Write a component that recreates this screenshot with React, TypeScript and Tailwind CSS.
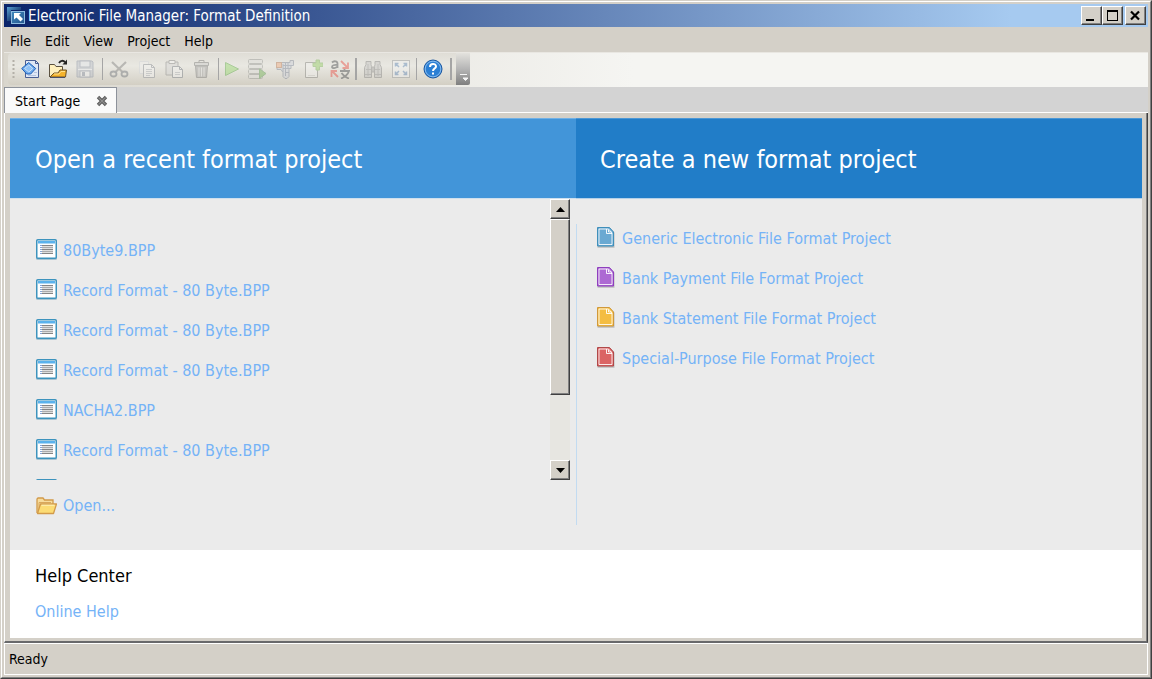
import type { ReactNode } from "react";

const raised =
  "bg-[#d4d0c8] border border-t-white border-l-white border-r-[#404040] border-b-[#404040] shadow-[inset_-1px_-1px_0_#808080]";

const menus = ["File", "Edit", "View", "Project", "Help"];

const recent = [
  "80Byte9.BPP",
  "Record Format - 80 Byte.BPP",
  "Record Format - 80 Byte.BPP",
  "Record Format - 80 Byte.BPP",
  "NACHA2.BPP",
  "Record Format - 80 Byte.BPP",
];

const templates = [
  { label: "Generic Electronic File Format Project", fill: "#6aa9d2", edge: "#3f8fba" },
  { label: "Bank Payment File Format Project", fill: "#ad69d3", edge: "#8e3fbe" },
  { label: "Bank Statement File Format Project", fill: "#f4bd42", edge: "#d0983a" },
  { label: "Special-Purpose File Format Project", fill: "#db6464", edge: "#b04848" },
];

function AppIcon() {
  return (
    <svg width="20" height="20" viewBox="0 0 20 20" aria-hidden="true">
      <defs>
        <linearGradient id="appBack" x1="0" y1="0" x2="1" y2="1">
          <stop offset="0" stopColor="#5aa0d0" />
          <stop offset="0.7" stopColor="#12336b" />
        </linearGradient>
        <linearGradient id="appFront" x1="0" y1="0" x2="1" y2="1">
          <stop offset="0" stopColor="#3f88bd" />
          <stop offset="1" stopColor="#24578f" />
        </linearGradient>
      </defs>
      <path d="M0 15V1h14v3H4v11z" fill="url(#appBack)" />
      <rect x="4.500" y="5.500" width="13" height="12" fill="url(#appFront)" stroke="#8dbbe0" />
      <path d="M7 7h7l-2 2 4 4-2.500 2.500-4-4-2.500 2z" fill="#fff" />
    </svg>
  );
}

function Svg({ children, faded = false }: { children: ReactNode; faded?: boolean }) {
  return (
    <svg width="20" height="20" viewBox="0 0 20 20" fill="none" aria-hidden="true" className={faded ? "opacity-40" : ""}>
      {children}
    </svg>
  );
}

const NewIcon = () => (
  <Svg>
    <path d="M4.500 1.500h10l3 3v14h-13z" fill="#dfe7f5" stroke="#4a5f94" />
    <path d="M14.500 1.500v3h3" stroke="#4a5f94" />
    <path d="M7 16.500h8M13 13.500h3" stroke="#b5c3de" />
    <path d="M0.700 9.500l7-6 7 6-5 5.500h-4z" fill="#6fa9ea" stroke="#1d5fb8" strokeLinejoin="round" />
    <path d="M3.500 9.500l4.300-3.500 4 3.500-4 3.500z" fill="#8fc1f5" stroke="#c9e1fb" />
  </Svg>
);

const OpenIcon = () => (
  <Svg>
    <path d="M1.500 18V5.500h5l1.500 2h6.500V11" fill="#fff0bd" stroke="#5b5140" />
    <path d="M2 18l4-4h4l2-3h6.500l-1 7z" fill="#f5b32c" stroke="#6d5326" />
    <path d="M6 15h5l2-2.500h4" stroke="#ffe08a" />
    <path d="M2 18.500h15" stroke="#4a4f66" />
    <path d="M11 4c1.500-2.500 4-3 6-1" stroke="#222" strokeWidth="1.800" />
    <path d="M14.500 5.500h4.500v-5z" fill="#222" />
  </Svg>
);

const SaveIcon = () => (
  <Svg faded>
    <path d="M2 2h15l1 1v15H2z" fill="#b6bcc8" stroke="#7c869b" />
    <rect x="5" y="2" width="10" height="6" fill="#e4e7ee" stroke="#7c869b" />
    <path d="M3 10.500h14" stroke="#eef0f5" />
    <rect x="5" y="12" width="10" height="6" fill="#f2f3f6" stroke="#7c869b" />
    <rect x="7" y="13" width="3" height="4" fill="#7c869b" />
  </Svg>
);

const CutIcon = () => (
  <Svg faded>
    <path d="M3 3l10.500 10M17 3L6.500 13" stroke="#737373" strokeWidth="2.200" />
    <ellipse cx="4.500" cy="15" rx="3" ry="2.500" stroke="#60666f" strokeWidth="1.800" />
    <ellipse cx="15.500" cy="15" rx="3" ry="2.500" stroke="#60666f" strokeWidth="1.800" />
  </Svg>
);

const CopyIcon = () => (
  <Svg faded>
    <path d="M2.500 2.500h9v12h-9z" fill="#f1f1f1" stroke="#d0d4da" />
    <path d="M6.500 5.500h8l3 3v10h-11z" fill="#f7f7f7" stroke="#7d828b" />
    <path d="M14.500 5.500v3h3" stroke="#7d828b" />
    <path d="M9 10.500h6M9 12.500h6M9 14.500h6M9 16.500h4" stroke="#a9aeb6" />
  </Svg>
);

const PasteIcon = () => (
  <Svg faded>
    <path d="M1 3h12v13H1z" fill="#d3d3d3" stroke="#7b7b7b" />
    <path d="M4 1.500h6v3H4z" fill="#fafafa" stroke="#7b7b7b" />
    <path d="M7.500 7.500h7l3 3v8h-10z" fill="#f5f5f5" stroke="#666d77" />
    <path d="M14.500 7.500v3h3" stroke="#666d77" />
    <path d="M10 13.500h5M10 15.500h5" stroke="#a9aeb6" />
  </Svg>
);

const TrashIcon = () => (
  <Svg faded>
    <path d="M2.500 7h12l-1 11.500h-10z" fill="#9a9a9a" stroke="#6a6a6a" />
    <path d="M6 8.500v9M8.500 8.500v9M11 8.500v9" stroke="#dedede" />
    <path d="M1.500 3.500h14v3h-14z" fill="#c7c7c7" stroke="#6a6a6a" />
    <path d="M6 3.500v-2h5v2" stroke="#6a6a6a" />
  </Svg>
);

const RunIcon = () => (
  <Svg faded>
    <path d="M4.500 3.500l13 6.500-13 6.500z" fill="#8fd862" stroke="#4fa334" strokeLinejoin="round" />
  </Svg>
);

const DataRunIcon = () => (
  <Svg faded>
    {[0.5, 5.5, 10.5, 15.5].map((y) => (
      <rect key={y} x="1.500" y={y} width="14" height="4" rx="1" fill="#dededb" stroke="#8a8c88" />
    ))}
    <path d="M12.500 10l6.500 4.500-6.500 5z" fill="#66ad44" stroke="#4c9140" strokeLinejoin="round" />
  </Svg>
);

const GaugeIcon = () => (
  <Svg faded>
    <path
      d="M2 3.500h13V1.500h3.500v5H16v3h-2v8l-2 2h-2l-2-2v-4l-2-3H2z"
      fill="#c9cdd8"
      stroke="#717a8c"
      strokeLinejoin="round"
    />
    <path d="M8 5v8M10.500 4v13M13 4v5M8 6.500h10M8 9.500h6M10 13.500h4" stroke="#6f7a90" />
    <rect x="1.500" y="3.500" width="5" height="5" fill="#f0a070" stroke="#b06a40" />
  </Svg>
);

const AddPageIcon = () => (
  <Svg faded>
    <path d="M2.500 3.500h12v15h-12z" fill="#f4f4f2" stroke="#73736f" />
    <path d="M5 16.500h7" stroke="#c9c9c5" />
    <path d="M13 1h3.500v3H20v3.500h-3.500V11H13V7.500h-3V4h3z" fill="#8acb52" stroke="#6fae46" />
  </Svg>
);

const ConvertIcon = () => (
  <Svg faded>
    <g stroke="#34383c" strokeWidth="1.800">
      <path d="M2 3.500C4 1.500 7.500 2 7.500 4.500V9M7.500 6C4 5.500 2 6.500 2 8s4 1.500 5.500-.5" />
      <path d="M10 12h9c-1 3-4 6-8 7.500M11.500 14c2 3 4 4.500 7.500 5.500M14.500 9.500V12" />
    </g>
    <g stroke="#e8392e" strokeWidth="1.800">
      <path d="M11 2l6 6M18 3.500V9h-5.500" />
      <path d="M8 18l-6-6M1.500 18v-6H7" />
    </g>
  </Svg>
);

const BinocularsIcon = () => (
  <Svg faded>
    <path d="M3 2.500h5v3l.5 2v11h-7v-10L3 5.500z" fill="#bdbdbd" stroke="#777" />
    <path d="M12 2.500h5v3l1.500 3v10h-7v-11l.5-2z" fill="#bdbdbd" stroke="#777" />
    <path d="M8.500 8h3v5h-3z" fill="#999" stroke="#777" />
    <path d="M3 10.500h5M12 10.500h5M2 15.500h6M12 15.500h6M5 5v12M15 5v12" stroke="#888" />
  </Svg>
);

const FitIcon = () => (
  <Svg faded>
    <rect x="1.500" y="1.500" width="17" height="17" fill="#f4f6f8" stroke="#8b8f94" />
    <g stroke="#517eb5" strokeWidth="1.500">
      <path d="M4.500 7.500v-3h3M4.500 4.500L8 8M12.500 4.500h3v3M15.500 4.500L12 8M4.500 12.500v3h3M4.500 15.500L8 12M12.500 15.500h3v-3M15.500 15.500L12 12" />
    </g>
  </Svg>
);

const HelpIcon = () => (
  <Svg>
    <circle cx="10" cy="10" r="9" fill="#2b7fd4" stroke="#1b57a0" />
    <circle cx="10" cy="10" r="7.800" stroke="#8fc2f2" strokeWidth="0.900" />
    <path d="M7 8c0-4 6-4 6-.5 0 2-3 2.200-3 4.500" stroke="#fff" strokeWidth="2" />
    <rect x="9" y="13.500" width="2" height="2" fill="#fff" />
  </Svg>
);

function Tool({ label, width = "w-7", children }: { label: string; width?: string; children: ReactNode }) {
  return (
    <button type="button" aria-label={label} className={`${width} flex h-7 shrink-0 items-center justify-center`}>
      {children}
    </button>
  );
}

function ListIcon() {
  return (
    <svg width="21" height="21" viewBox="0 0 21 21" className="mb-1 shrink-0" aria-hidden="true">
      <rect x="0" y="1" width="21" height="20" rx="1.500" fill="#a9c3d0" />
      <rect x="0.750" y="0.750" width="19.500" height="18.500" rx="1" fill="#fff" stroke="#3d93bd" strokeWidth="1.500" />
      <rect x="2" y="2" width="17" height="2.500" fill="#5bb2ec" />
      <path d="M4 6.500h2M4 8.500h2M4 10.500h2M4 12.500h2M4 14.500h2" stroke="#86a5d8" />
      <path d="M6 6.500h11M6 10.500h11M6 14.500h11" stroke="#858585" />
      <path d="M6 8.500h11M6 12.500h11" stroke="#ababab" />
      <path d="M6 7.500h11M6 9.500h11M6 11.500h11M6 13.500h11" stroke="#dedede" />
    </svg>
  );
}

function PageIcon({ fill, edge }: { fill: string; edge: string }) {
  return (
    <svg width="18" height="21" viewBox="0 0 18 21" className="mb-1 shrink-0" aria-hidden="true">
      <path d="M0 1h13l4 4v15H0z" transform="translate(0.500 0.700)" fill="#bdbdbd" />
      <path d="M0.500 0.500h12l4 4.500v14h-16z" fill={fill} stroke={edge} />
      <path d="M2 2h9.500l3.500 4v11.500H2z" fill="none" stroke="#fff" strokeOpacity="0.850" />
      <path d="M9.500 2v4.500H15M11.500 2.500v2.500h3" fill="none" stroke="#fff" strokeOpacity="0.900" />
    </svg>
  );
}

function FolderIcon() {
  return (
    <svg width="21" height="18" viewBox="0 0 21 18" className="shrink-0" aria-hidden="true">
      <path d="M1 16V2l1-1h5l1.500 2H17v4" fill="#f7dc9c" stroke="#d29a4a" strokeWidth="1.300" />
      <path d="M3 13V5.500h12" fill="none" stroke="#d9a85c" />
      <path d="M4.500 7h16l-3 9.500H1.500z" fill="#fcdc74" stroke="#d29a4a" strokeWidth="1.300" strokeLinejoin="round" />
      <path d="M5.500 8.200h13" stroke="#fff3bd" />
    </svg>
  );
}

const link = "flex items-center text-[16px] leading-5 text-[#75b3f7]";

export default function App() {
  return (
    <div className="flex min-h-screen flex-col border border-t-[#d4d0c8] border-r-[#404040] border-b-[#404040] border-l-[#d4d0c8] bg-[#d4d0c8] font-['DejaVu_Sans_Condensed','Noto_Sans',sans-serif] text-black">
      <div className="flex grow flex-col border border-t-white border-r-[#808080] border-b-[#808080] border-l-white p-0.5">
        <header>
          <div className="flex h-[23px] items-center bg-[linear-gradient(90deg,#0a246a,#a6caf0_88%)] pr-0.5 pl-[3px]">
            <AppIcon />
            <h1 className="ml-px grow text-[15px] leading-5 text-white">Electronic File Manager: Format Definition</h1>
            <button type="button" aria-label="Minimize" className={`${raised} flex h-[19px] w-[21px] items-center justify-center`}>
              <svg width="13" height="13" aria-hidden="true"><path d="M1 11h8" stroke="#000" strokeWidth="2" /></svg>
            </button>
            <button type="button" aria-label="Maximize" className={`${raised} flex h-[19px] w-[21px] items-center justify-center`}>
              <svg width="13" height="13" aria-hidden="true" shapeRendering="crispEdges">
                <path d="M1 2h11" stroke="#000" strokeWidth="2" />
                <path d="M1.500 2v9.500h10V2" fill="none" stroke="#000" />
              </svg>
            </button>
            <button type="button" aria-label="Close" className={`${raised} ml-0.5 flex h-[19px] w-[21px] items-center justify-center`}>
              <svg width="13" height="13" aria-hidden="true"><path d="M2 2.500l8 8M10 2.500l-8 8" stroke="#000" strokeWidth="2.200" /></svg>
            </button>
          </div>
          <nav className="flex h-[26px] items-center gap-3.5 border-b border-[#e9e7e2] pt-0.5 pl-1.5 text-[14px]">
            {menus.map((m) => (
              <button key={m} type="button" className="leading-5">
                {m}
              </button>
            ))}
          </nav>
          <div className="flex h-[34px] bg-[linear-gradient(90deg,#d9d6cd,#f5f5f2_55%)]">
            <div className="ml-1 flex h-8 shrink-0 items-center rounded-l bg-[linear-gradient(180deg,#dfddd6,#e9e8e2_40%,#d3cfc4)] pl-1">
              <svg width="3" height="20" aria-hidden="true">
                <path d="M1.500 1v18" stroke="#b3b0a8" strokeWidth="2" strokeDasharray="2 2" />
              </svg>
              <div className="flex pl-0.5">
                <Tool label="New" width="w-[27px]"><NewIcon /></Tool>
                <Tool label="Open" width="w-[27px]"><OpenIcon /></Tool>
                <Tool label="Save" width="w-[27px]"><SaveIcon /></Tool>
              </div>
              <span className="mr-0.5 ml-1 h-[22px] w-px bg-[#a5a5a5]" />
              <Tool label="Cut"><CutIcon /></Tool>
              <Tool label="Copy"><CopyIcon /></Tool>
              <Tool label="Paste"><PasteIcon /></Tool>
              <Tool label="Delete"><TrashIcon /></Tool>
              <span className="ml-px h-[22px] w-px bg-[#a5a5a5]" />
              <Tool label="Run" width="w-6"><RunIcon /></Tool>
              <Tool label="Run data"><DataRunIcon /></Tool>
              <Tool label="Measure"><GaugeIcon /></Tool>
              <Tool label="Add page" width="w-[27px]"><AddPageIcon /></Tool>
              <Tool label="Convert"><ConvertIcon /></Tool>
              <span className="mr-0.5 ml-px h-[22px] w-0.5 bg-[#a5a5a5]" />
              <Tool label="Find"><BinocularsIcon /></Tool>
              <Tool label="Fit" width="w-[27px]"><FitIcon /></Tool>
              <span className="mx-0.5 h-[22px] w-px bg-[#a5a5a5]" />
              <Tool label="Help"><HelpIcon /></Tool>
              <span className="mr-1 ml-[3px] h-[22px] w-0.5 bg-[#a5a5a5]" />
            </div>
            <button type="button" aria-label="Toolbar options" className="flex h-8 w-3.5 items-end justify-center rounded-br-xs bg-[linear-gradient(180deg,#e3e2dd,#b5b5b5_50%,#7f7f7f)] pb-1">
              <svg width="9" height="8" aria-hidden="true">
                <path d="M1 1.500h7M4 5h5l-2.500 2.500z" fill="#f4f4f4" stroke="#f4f4f4" />
              </svg>
            </button>
          </div>
        </header>

        <div className="flex h-[26px] items-end border-b border-white bg-[#d3d3d3]">
          <div className="-mb-px flex h-[26px] items-center border border-b-0 border-[#8d929b] bg-[#fafafa] pr-2 pl-2.5 text-[14px]">
            <button type="button" className="leading-5">Start Page</button>
            <button type="button" aria-label="Close tab" className="ml-4">
              <svg width="12" height="12" aria-hidden="true">
                <path d="M2 2l8 8M10 2l-8 8" stroke="#5a5a5a" strokeWidth="3.400" />
                <path d="M2.500 2.500l7 7M9.500 2.500l-7 7" stroke="#8e8e8e" strokeWidth="1.200" />
              </svg>
            </button>
          </div>
        </div>

        <main className="flex grow flex-col border-x border-b-2 border-l-white border-r-[#404040] border-b-[#68696b] px-[5px] pt-[5px] pb-[3px] shadow-[inset_-1px_0_0_#808080]">
          <div className="grid grow grid-cols-2 grid-rows-[81px_1fr] bg-[#ebebeb]">
            <div className="flex items-center border-t border-b border-t-[#6fb0e6] border-b-[#cfe0ee] bg-[#4295d9] pt-0.5 pl-[25px]">
              <h2 className="text-[25px] leading-8 text-white">Open a recent format project</h2>
            </div>
            <div className="flex items-center border-t border-b border-t-[#4b97d6] border-b-[#b5d1e8] bg-[#217dc8] pt-0.5 pl-6">
              <h2 className="text-[25px] leading-8 text-white">Create a new format project</h2>
            </div>

            <section>
              <div className="flex h-[281px]">
                <ul className="grow overflow-y-auto pt-8 pl-[26px] [scrollbar-width:none]">
                  {recent.map((name, i) => (
                    <li key={i} className="flex h-10 items-center">
                      <a href="#" className={`${link} gap-1.5`}>
                        <ListIcon />
                        {name}
                      </a>
                    </li>
                  ))}
                  <li className="flex h-10 items-center">
                    <a href="#" aria-label="NACHA.BPP" className={link}>
                      <ListIcon />
                    </a>
                  </li>
                </ul>
                <div className="mr-1.5 flex w-5 flex-col bg-[#e7e6e1]">
                  <button type="button" aria-label="Scroll up" className={`${raised} flex h-5 items-center justify-center`}>
                    <svg width="9" height="5" aria-hidden="true"><path d="M0 5l4.500-5L9 5z" /></svg>
                  </button>
                  <div className={`${raised} h-44`} />
                  <div className="grow" />
                  <button type="button" aria-label="Scroll down" className={`${raised} flex h-5 items-center justify-center`}>
                    <svg width="9" height="5" aria-hidden="true"><path d="M0 0l4.500 5L9 0z" /></svg>
                  </button>
                </div>
              </div>
              <div className="flex h-[52px] items-center pl-[26px]">
                <a href="#" className={`${link} gap-1.5`}>
                  <FolderIcon />
                  Open...
                </a>
              </div>
            </section>

            <section className="pt-[25px] pb-[25px]">
              <ul className="h-full border-l border-[#c2dbf1] pl-5">
                {templates.map((t) => (
                  <li key={t.label} className="flex h-10 items-center pb-2.5">
                    <a href="#" className={`${link} gap-[7px]`}>
                      <PageIcon fill={t.fill} edge={t.edge} />
                      {t.label}
                    </a>
                  </li>
                ))}
              </ul>
            </section>
          </div>
          <section className="bg-white px-[25px] pt-3 pb-4">
            <h3 className="text-[18px] leading-7">Help Center</h3>
            <a href="#" className={`${link} mt-3`}>
              Online Help
            </a>
          </section>
        </main>

        <footer className="border border-white px-1 py-[5px] text-[14px] leading-5">Ready</footer>
      </div>
    </div>
  );
}
